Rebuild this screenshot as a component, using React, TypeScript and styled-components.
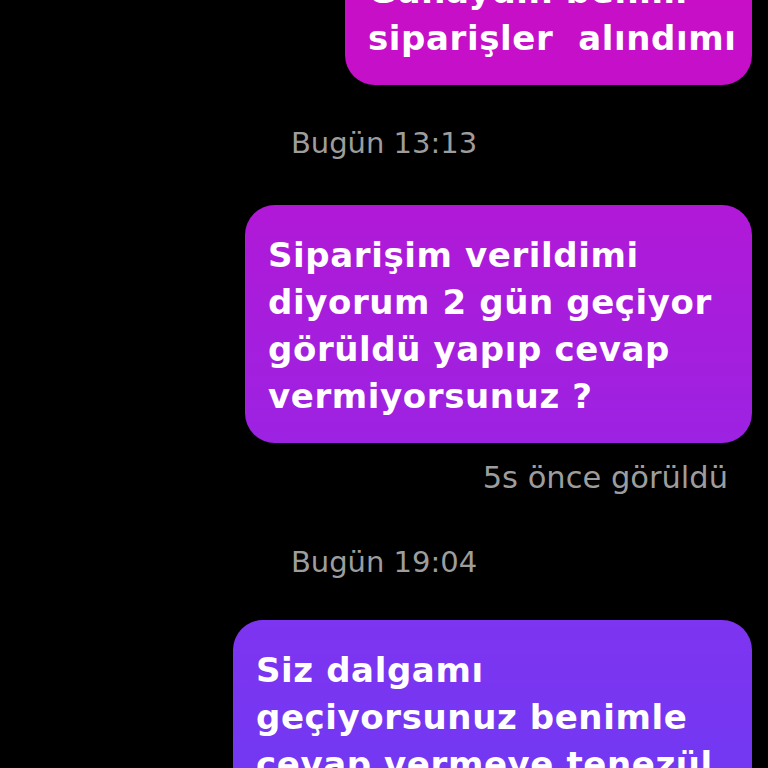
import React from "react";
import styled, { createGlobalStyle } from "styled-components";

const Global = createGlobalStyle`
  html, body {
    margin: 0;
    padding: 0;
    background: #000;
  }
  body {
    font-family: "DejaVu Sans", "Noto Sans", sans-serif;
  }
`;

const Screen = styled.div`
  width: 768px;
  height: 768px;
  overflow: hidden;
  background: #000;
`;

const Thread = styled.div`
  display: flex;
  flex-direction: column;
  align-items: flex-end;
  padding: 0 16px 0 0;
  margin-top: -59px;
`;

const Bubble = styled.div<{ $width: number; $mt?: number }>`
  width: ${(p) => p.$width}px;
  box-sizing: border-box;
  margin-top: ${(p) => p.$mt ?? 0}px;
  padding: 27px 23px 23px;
  border-radius: 30px;
  background: linear-gradient(
    180deg,
    #c80fc7 0px,
    #c40fc9 90px,
    #b019d7 210px,
    #9d22e2 440px,
    #7e34f0 620px,
    #7338f2 768px
  );
  background-attachment: fixed;
  color: #fff;
  font-family: "DejaVu Sans", "Noto Sans", sans-serif;
  font-size: 34px;
  letter-spacing: 0.6px;
  line-height: 47px;
  font-weight: 700;
  white-space: pre;
`;

const DayStamp = styled.div<{ $mt: number }>`
  align-self: center;
  margin-top: ${(p) => p.$mt}px;
  margin-left: 16px;
  color: #9d9d9d;
  font-size: 29px;
  line-height: 36px;
  font-weight: 400;
`;

const Seen = styled.div<{ $mt: number }>`
  margin-top: ${(p) => p.$mt}px;
  margin-right: 24px;
  color: #9d9d9d;
  font-size: 30.5px;
  line-height: 36px;
  font-weight: 400;
`;

export default function App() {
  return (
    <Screen>
      <Global />
      <Thread>
        <Bubble $width={407}>{"Günaydın benim\nsiparişler  alındımı"}</Bubble>
        <DayStamp $mt={40}>Bugün 13:13</DayStamp>
        <Bubble $width={507} $mt={44}>
          {"Siparişim verildimi\ndiyorum 2 gün geçiyor\ngörüldü yapıp cevap\nvermiyorsunuz ?"}
        </Bubble>
        <Seen $mt={17}>5s önce görüldü</Seen>
        <DayStamp $mt={48}>Bugün 19:04</DayStamp>
        <Bubble $width={519} $mt={40}>
          {"Siz dalgamı\ngeçiyorsunuz benimle\ncevap vermeye tenezül\netmiyorsunuz"}
        </Bubble>
      </Thread>
    </Screen>
  );
}
